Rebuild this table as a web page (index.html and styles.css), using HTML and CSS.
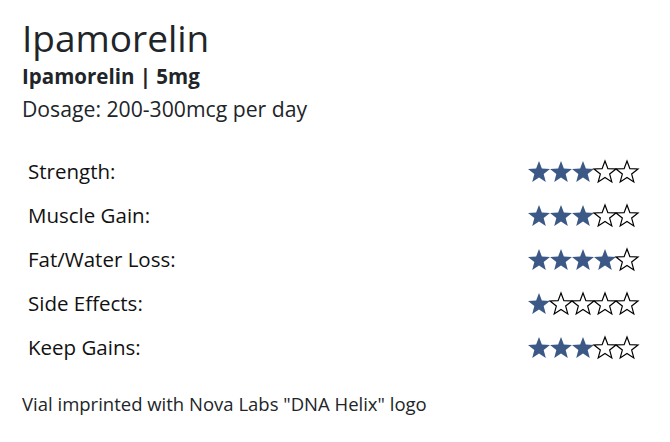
FILE: index.html
```html
<!DOCTYPE html>
<html>
<head>
<meta charset="utf-8">
<link rel="stylesheet" href="styles.css">
</head>
<body>
<svg width="0" height="0" class="defs">
  <defs>
    <path id="star" d="M11 0L13.88 7.61L22 8L15.66 13.08L17.8 20.93L11 16.47L4.2 20.93L6.34 13.08L0 8L8.12 7.61Z"/>
  </defs>
</svg>
<div class="card">
  <h1 class="title">Ipamorelin</h1>
  <div class="subtitle">Ipamorelin | 5mg</div>
  <div class="dosage">Dosage: 200-300mcg per day</div>
  <table class="ratings">
    <tr>
      <td class="label">Strength:</td>
      <td class="stars">
        <svg class="star on" viewBox="0 0 22 21"><use href="#star"/></svg><svg class="star on" viewBox="0 0 22 21"><use href="#star"/></svg><svg class="star on" viewBox="0 0 22 21"><use href="#star"/></svg><svg class="star off" viewBox="0 0 22 21"><use href="#star"/></svg><svg class="star off" viewBox="0 0 22 21"><use href="#star"/></svg>
      </td>
    </tr>
    <tr>
      <td class="label">Muscle Gain:</td>
      <td class="stars">
        <svg class="star on" viewBox="0 0 22 21"><use href="#star"/></svg><svg class="star on" viewBox="0 0 22 21"><use href="#star"/></svg><svg class="star on" viewBox="0 0 22 21"><use href="#star"/></svg><svg class="star off" viewBox="0 0 22 21"><use href="#star"/></svg><svg class="star off" viewBox="0 0 22 21"><use href="#star"/></svg>
      </td>
    </tr>
    <tr>
      <td class="label">Fat/Water Loss:</td>
      <td class="stars">
        <svg class="star on" viewBox="0 0 22 21"><use href="#star"/></svg><svg class="star on" viewBox="0 0 22 21"><use href="#star"/></svg><svg class="star on" viewBox="0 0 22 21"><use href="#star"/></svg><svg class="star on" viewBox="0 0 22 21"><use href="#star"/></svg><svg class="star off" viewBox="0 0 22 21"><use href="#star"/></svg>
      </td>
    </tr>
    <tr>
      <td class="label">Side Effects:</td>
      <td class="stars">
        <svg class="star on" viewBox="0 0 22 21"><use href="#star"/></svg><svg class="star off" viewBox="0 0 22 21"><use href="#star"/></svg><svg class="star off" viewBox="0 0 22 21"><use href="#star"/></svg><svg class="star off" viewBox="0 0 22 21"><use href="#star"/></svg><svg class="star off" viewBox="0 0 22 21"><use href="#star"/></svg>
      </td>
    </tr>
    <tr>
      <td class="label">Keep Gains:</td>
      <td class="stars">
        <svg class="star on" viewBox="0 0 22 21"><use href="#star"/></svg><svg class="star on" viewBox="0 0 22 21"><use href="#star"/></svg><svg class="star on" viewBox="0 0 22 21"><use href="#star"/></svg><svg class="star off" viewBox="0 0 22 21"><use href="#star"/></svg><svg class="star off" viewBox="0 0 22 21"><use href="#star"/></svg>
      </td>
    </tr>
  </table>
  <p class="note">Vial imprinted with Nova Labs "DNA Helix" logo</p>
</div>
</body>
</html>
```
FILE: styles.css
```css
* { box-sizing: border-box; }
body {
  margin: 0;
  background: #fff;
  color: #212529;
  font-family: "Open Sans", "Noto Sans", sans-serif;
}
.defs { position: absolute; }
.card {
  padding: 14px 32px 0 22px;
  width: 670px;
}
.title {
  font-size: 37px;
  font-weight: 400;
  line-height: 48px;
  margin: 0;
}
.subtitle {
  font-size: 20.5px;
  font-weight: 700;
  line-height: 28px;
}
.dosage {
  font-size: 21.2px;
  line-height: 38px;
  margin-bottom: 21px;
}
.ratings {
  width: 100%;
  border-collapse: collapse;
}
.ratings td {
  height: 44px;
  padding: 0 0 0 6px;
  vertical-align: middle;
}
.label {
  font-size: 20.5px;
  color: #111;
}
.stars {
  text-align: right;
  white-space: nowrap;
  font-size: 0;
  padding-right: 0;
}
.star {
  width: 22px;
  height: 21px;
  display: inline-block;
  vertical-align: middle;
  overflow: visible;
}
.star.on { fill: #3c5886; }
.star.off { fill: #fff; stroke: #000; stroke-width: 1.2; stroke-linejoin: miter; }
.note {
  font-size: 18.5px;
  margin: 23px 0 0 0;
  line-height: 24px;
}
```
